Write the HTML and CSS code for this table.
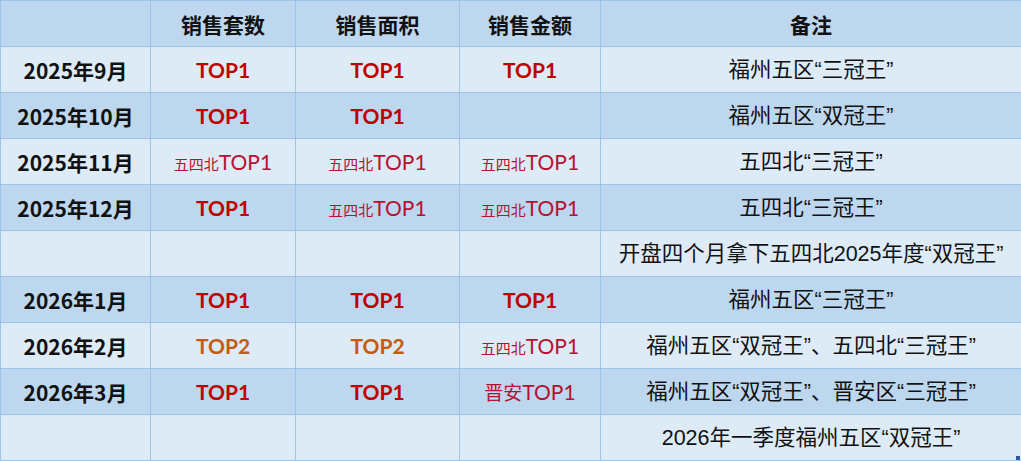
FILE: index.html
```html
<!DOCTYPE html>
<html lang="zh-CN">
<head>
<meta charset="utf-8">
<title>销售排名</title>
<link rel="stylesheet" href="styles.css">
</head>
<body>
<div class="wrap">
<table class="sheet">
  <colgroup>
    <col class="c1"><col class="c2"><col class="c3"><col class="c4"><col class="c5">
  </colgroup>
  <thead>
    <tr class="dark">
      <th></th><th>销售套数</th><th>销售面积</th><th>销售金额</th><th>备注</th>
    </tr>
  </thead>
  <tbody>
    <tr class="light">
      <td class="date">2025年9月</td>
      <td><span class="top">TOP1</span></td>
      <td><span class="top">TOP1</span></td>
      <td><span class="top">TOP1</span></td>
      <td class="note">福州五区“三冠王”</td>
    </tr>
    <tr class="dark">
      <td class="date">2025年10月</td>
      <td><span class="top">TOP1</span></td>
      <td><span class="top">TOP1</span></td>
      <td></td>
      <td class="note">福州五区“双冠王”</td>
    </tr>
    <tr class="light">
      <td class="date">2025年11月</td>
      <td><span class="area"><span class="cn">五四北</span>TOP1</span></td>
      <td><span class="area"><span class="cn">五四北</span>TOP1</span></td>
      <td><span class="area"><span class="cn">五四北</span>TOP1</span></td>
      <td class="note">五四北“三冠王”</td>
    </tr>
    <tr class="dark">
      <td class="date">2025年12月</td>
      <td><span class="top">TOP1</span></td>
      <td><span class="area"><span class="cn">五四北</span>TOP1</span></td>
      <td><span class="area"><span class="cn">五四北</span>TOP1</span></td>
      <td class="note">五四北“三冠王”</td>
    </tr>
    <tr class="light">
      <td></td><td></td><td></td><td></td>
      <td class="note">开盘四个月拿下五四北2025年度“双冠王”</td>
    </tr>
    <tr class="dark">
      <td class="date">2026年1月</td>
      <td><span class="top">TOP1</span></td>
      <td><span class="top">TOP1</span></td>
      <td><span class="top">TOP1</span></td>
      <td class="note">福州五区“三冠王”</td>
    </tr>
    <tr class="light">
      <td class="date">2026年2月</td>
      <td><span class="top two">TOP2</span></td>
      <td><span class="top two">TOP2</span></td>
      <td><span class="area"><span class="cn">五四北</span>TOP1</span></td>
      <td class="note">福州五区“双冠王”、五四北“三冠王”</td>
    </tr>
    <tr class="dark">
      <td class="date">2026年3月</td>
      <td><span class="top">TOP1</span></td>
      <td><span class="top">TOP1</span></td>
      <td><span class="area"><span class="cn big">晋安</span>TOP1</span></td>
      <td class="note">福州五区“双冠王”、晋安区“三冠王”</td>
    </tr>
    <tr class="light">
      <td></td><td></td><td></td><td></td>
      <td class="note">2026年一季度福州五区“双冠王”</td>
    </tr>
  </tbody>
</table>
<span class="handle"></span>
</div>
</body>
</html>
```
FILE: styles.css
```css
html, body {
  margin: 0;
  padding: 0;
  background: #ffffff;
}
.wrap {
  position: relative;
  width: 1021px;
  height: 461px;
  overflow: hidden;
}
.sheet {
  border-collapse: collapse;
  table-layout: fixed;
  width: 1021px;
  font-family: "Noto Sans CJK SC", "Microsoft YaHei", sans-serif;
  font-size: 21px;
  color: #111;
}
.c1 { width: 150px; }
.c2 { width: 145px; }
.c3 { width: 164px; }
.c4 { width: 141px; }
.c5 { width: 421px; }
.sheet th,
.sheet td {
  border: 1px solid #9dc3e6;
  height: 45px;
  padding: 0;
  text-align: center;
  vertical-align: middle;
  line-height: 1;
  white-space: nowrap;
}
.sheet th { font-weight: 700; padding-top: 1px; height: 44px; }
.dark { background: #bdd7ee; }
.light { background: #ddebf7; }
.sheet .date { font-weight: 700; padding-top: 2px; height: 43px; }
.sheet .note {
  font-family: "Liberation Sans", "Noto Sans CJK SC", sans-serif;
  font-weight: 400;
  font-size: 21.5px;
  padding-top: 3px;
  height: 42px;
}
.top {
  font-family: Lato, "Liberation Sans", sans-serif;
  font-weight: 700;
  color: #c00000;
  font-size: 21px;
}
.top.two { color: #c55a11; }
.area {
  font-family: Lato, "Liberation Sans", sans-serif;
  font-weight: 400;
  color: #b8102f;
  font-size: 21px;
}
.area .cn {
  font-family: "Noto Sans CJK SC", sans-serif;
  font-size: 15px;
}
.area .cn.big { font-size: 19px; }
.handle {
  position: absolute;
  right: 1px;
  bottom: 1px;
  width: 4px;
  height: 4px;
  background: #2f5597;
}
```
